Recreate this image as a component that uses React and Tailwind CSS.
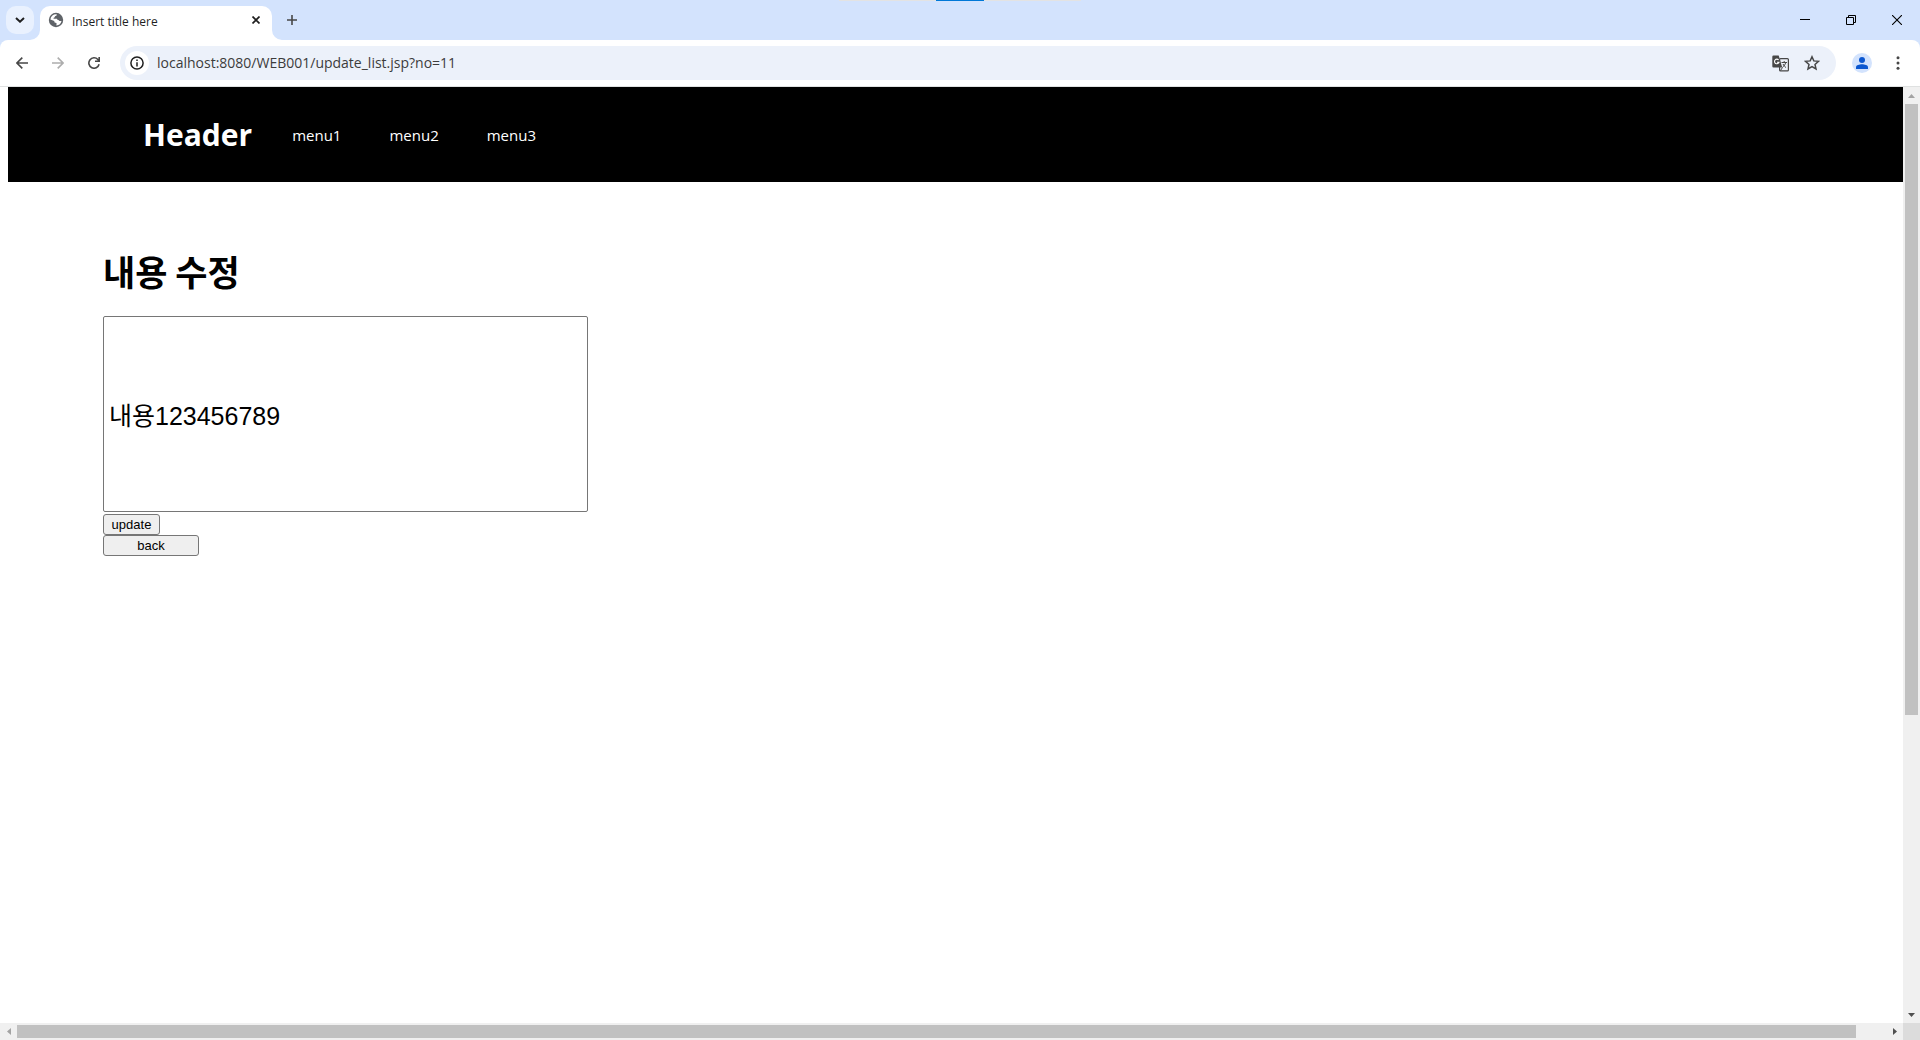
import React, { useState } from "react";

const iconButton = "flex size-7 shrink-0 items-center justify-center rounded-full";

function TabStrip() {
  return (
    <div className="relative flex h-10 shrink-0 items-start bg-[#d3e3fd]">
      <button aria-label="Search tabs" className="ml-1.5 mt-1.5 flex size-7 items-center justify-center rounded-[10px] bg-[#e9f1fe]">
        <svg width="10" height="6" viewBox="0 0 10 6" fill="none" stroke="#1f1f1f" strokeWidth="2"><path d="M1 1l4 3.7L9 1" /></svg>
      </button>
      <div className="relative ml-1.5 mt-1.5 flex h-[34px] w-[232px] items-center rounded-t-[10px] bg-white pl-2 pr-2 pb-1.5">
        <svg className="absolute -left-2.5 bottom-0" width="10" height="10" viewBox="0 0 10 10"><path d="M10 0v10H0A10 10 0 0 0 10 0z" fill="#fff" /></svg>
        <svg className="absolute -right-2.5 bottom-0" width="10" height="10" viewBox="0 0 10 10"><path d="M0 0v10h10A10 10 0 0 1 0 0z" fill="#fff" /></svg>
        <svg width="16" height="16" viewBox="0 0 16 16">
          <circle cx="8" cy="8" r="7.2" fill="#5f6368" />
          <path d="M8.600 2.300c.5 1-.2 1.500-1.100 1.700-.9.200-.4 1.300-1.200 1.500-.7.200-1 .6-.6 1.200h2.600c.9 0 1.300.7 1.300 1.400.9 0 1.600.2 1.700 1h2.200a5.700 5.700 0 0 1-5 4.500c-.3-.5-.1-1.100.1-1.700.2-.9-.6-1.100-1.400-1.200-.8-.1-.9-.8-.9-1.600L2.400 7.500A5.700 5.700 0 0 1 8.600 2.300z" fill="#fff" />
        </svg>
        <span className="ml-2 flex-1 pt-1 text-[12px] leading-4 text-[#1f1f1f]">Insert title here</span>
        <button aria-label="Close tab" className="flex size-4 items-center justify-center">
          <svg width="8" height="8" viewBox="0 0 8 8" stroke="#1f1f1f" strokeWidth="1.700"><path d="M.5.5l7 7M7.500.5l-7 7" /></svg>
        </button>
      </div>
      <button aria-label="New tab" className="ml-1.5 mt-1.5 flex size-7 items-center justify-center">
        <svg width="10" height="10" viewBox="0 0 10 10" stroke="#474747" strokeWidth="1.600"><path d="M5 0v10M0 5h10" /></svg>
      </button>
      <div className="absolute left-1/2 top-0 flex h-px w-[242px] -translate-x-1/2 justify-center bg-[#e3e3e3]">
        <div className="w-12 bg-[#0078d7]" />
      </div>
      <div className="ml-auto flex">
        <button aria-label="Minimize" className="flex h-10 w-[46px] items-center justify-center">
          <svg width="10" height="10" viewBox="0 0 10 10" stroke="#000"><path d="M0 4.500h10" /></svg>
        </button>
        <button aria-label="Restore" className="flex h-10 w-[46px] items-center justify-center">
          <svg width="10" height="10" viewBox="0 0 10 10" fill="none" stroke="#000"><path d="M.5 2.500h7v7h-7zM2.500 2.500v-2h7v7h-2" /></svg>
        </button>
        <button aria-label="Close" className="flex h-10 w-[46px] items-center justify-center">
          <svg width="10" height="10" viewBox="0 0 10 10" stroke="#000" strokeWidth="1.100"><path d="M0 0l10 10M10 0L0 10" /></svg>
        </button>
      </div>
    </div>
  );
}

function Toolbar() {
  return (
    <div className="shrink-0 bg-[#d3e3fd]">
      <div className="flex h-[47px] items-center rounded-t-[8px] border-b border-[#dfe1e1] bg-white pl-2 pr-2">
        <button aria-label="Back" className={iconButton}>
          <svg width="12" height="12" viewBox="0 0 12 12" fill="none" stroke="#474747" strokeWidth="1.600"><path d="M12 6H1M6.300.6L.9 6l5.400 5.400" /></svg>
        </button>
        <button aria-label="Forward" className={`${iconButton} ml-2`}>
          <svg width="12" height="12" viewBox="0 0 12 12" fill="none" stroke="#adadad" strokeWidth="1.600"><path d="M0 6h11M5.700.6L11.100 6l-5.400 5.400" /></svg>
        </button>
        <button aria-label="Reload" className={`${iconButton} ml-2`}>
          <svg width="12" height="12" viewBox="0 0 12 12" fill="none" stroke="#474747" strokeWidth="1.600"><path d="M11.100 7.300A5.200 5.200 0 1 1 9.900 2.500L11 3.700M11.200 0v4.200H7" /></svg>
        </button>
        <div className="ml-3 flex h-[34px] flex-1 items-center rounded-full bg-[#ecf1fa] pl-[5px] pr-2">
          <button aria-label="Site information" className="flex size-6 items-center justify-center rounded-full bg-white">
            <svg width="14" height="14" viewBox="0 0 14 14" fill="none" stroke="#1f1f1f" strokeWidth="1.500"><circle cx="7" cy="7" r="6.100" /><path d="M7 6.200v4.200M7 3.400v1.500" /></svg>
          </button>
          <input
            aria-label="Address"
            defaultValue="localhost:8080/WEB001/update_list.jsp?no=11"
            className="ml-2 h-5 min-w-0 flex-1 bg-transparent text-[14px] leading-5 text-[#3c3c3c] outline-none"
          />
          <button aria-label="Translate" className="flex size-8 items-center justify-center">
            <svg width="17" height="17" viewBox="0 0 17 17" fill="none">
              <rect x="7.600" y="3.600" width="8.800" height="12.300" rx="1" stroke="#474747" strokeWidth="1.200" />
              <path d="M1.500.5h5.200l3.500 12H1.500a1.200 1.200 0 0 1-1.200-1.200V1.700A1.200 1.200 0 0 1 1.500.5z" fill="#474747" />
              <path d="M6.600 5A2.300 2.300 0 1 0 7 7.200H5" stroke="#fff" strokeWidth="1.100" />
              <path d="M9.500 7.500h5.500M12.200 6v1.500M13.700 7.500c-.4 2-1.700 3.700-3.200 4.800M11 9c.7 1.500 1.700 2.600 3 3.600M8.500 15.500l2-3" stroke="#474747" />
            </svg>
          </button>
          <button aria-label="Bookmark this page" className="flex size-8 items-center justify-center">
            <svg width="16" height="16" viewBox="0 0 16 16" fill="none" stroke="#474747" strokeWidth="1.500"><path d="M8 1.800l1.800 4.100 4.700.4-3.500 3.100 1 4.500L8 11.500l-4 2.400 1-4.500-3.500-3.100 4.700-.4z" /></svg>
          </button>
        </div>
        <button aria-label="Profile" className={`${iconButton} ml-3`}>
          <svg width="20" height="20" viewBox="0 0 20 20"><circle cx="10" cy="10" r="10" fill="#d3e3fd" /><circle cx="10" cy="7" r="3" fill="#0b57d0" /><path d="M4 16v-1.800C4 12.200 7.500 11.300 10 11.300s6 .9 6 2.900V16z" fill="#0b57d0" /></svg>
        </button>
        <button aria-label="Menu" className={`${iconButton} ml-2`}>
          <svg width="4" height="14" viewBox="0 0 4 14" fill="#474747"><circle cx="2" cy="1.700" r="1.500" /><circle cx="2" cy="7" r="1.500" /><circle cx="2" cy="12.300" r="1.500" /></svg>
        </button>
      </div>
    </div>
  );
}

function VerticalScrollbar() {
  return (
    <div className="flex w-[17px] shrink-0 flex-col items-center bg-[#f0f0f0]">
      <button aria-label="Scroll up" className="flex h-[17px] w-full shrink-0 items-center justify-center">
        <svg width="7" height="4" viewBox="0 0 7 4" fill="#a3a3a3"><path d="M0 4l3.500-4L7 4z" /></svg>
      </button>
      <div className="flex w-[13px] flex-1 flex-col">
        <div className="h-[67.7%] bg-[#c1c1c1]" />
      </div>
      <button aria-label="Scroll down" className="flex h-[17px] w-full shrink-0 items-center justify-center">
        <svg width="7" height="4" viewBox="0 0 7 4" fill="#505050"><path d="M0 0l3.500 4L7 0z" /></svg>
      </button>
    </div>
  );
}

function HorizontalScrollbar() {
  return (
    <div className="flex h-[17px] shrink-0 items-center bg-[#f0f0f0]">
      <button aria-label="Scroll left" className="flex size-[17px] items-center justify-center">
        <svg width="4" height="7" viewBox="0 0 4 7" fill="#a3a3a3"><path d="M4 0L0 3.500 4 7z" /></svg>
      </button>
      <div className="flex h-[13px] flex-1">
        <div className="w-[98.4%] bg-[#c1c1c1]" />
      </div>
      <button aria-label="Scroll right" className="flex size-[17px] items-center justify-center">
        <svg width="4" height="7" viewBox="0 0 4 7" fill="#505050"><path d="M0 0l4 3.500L0 7z" /></svg>
      </button>
      <div className="size-[17px] bg-[#dcdcdc]" />
    </div>
  );
}

const formButton =
  "flex h-[21px] items-center justify-center rounded-[3px] border border-[#767676] bg-[#efefef] font-['Liberation_Sans','Noto_Sans_CJK_KR',sans-serif] text-[13px] leading-4";

function Page() {
  const [text, setText] = useState("내용123456789");
  return (
    <main className="min-w-0 flex-1 overflow-hidden pl-2">
      <header className="flex h-[95px] items-center bg-black pl-[135px] text-white">
        <h1 className="text-[30px] font-bold leading-10">Header</h1>
        <nav className="ml-10 flex gap-12 text-[15px] leading-6">
          <a href="#menu1">menu1</a>
          <a href="#menu2">menu2</a>
          <a href="#menu3">menu3</a>
        </nav>
      </header>
      <form className="flex flex-col items-start pl-[95px] pt-16" onSubmit={(e) => e.preventDefault()}>
        <h1 className="font-['Noto_Sans_CJK_KR',sans-serif] text-[35px] font-bold leading-[50px]">내용 수정</h1>
        <input
          aria-label="내용"
          value={text}
          onChange={(e) => setText(e.target.value)}
          className="mt-5 h-[196px] w-[485px] rounded-[2px] border border-[#767676] bg-white px-[5px] font-['Liberation_Sans','Noto_Sans_CJK_KR',sans-serif] text-[25px] outline-none"
        />
        <button type="submit" className={`${formButton} mt-0.5 w-[57px]`}>update</button>
        <button type="button" className={`${formButton} w-24`}>back</button>
      </form>
    </main>
  );
}

export default function App() {
  return (
    <div className="flex h-screen flex-col bg-white font-['Open_Sans','Noto_Sans_CJK_KR',sans-serif] text-black">
      <TabStrip />
      <Toolbar />
      <div className="flex min-h-0 flex-1">
        <Page />
        <VerticalScrollbar />
      </div>
      <HorizontalScrollbar />
    </div>
  );
}
